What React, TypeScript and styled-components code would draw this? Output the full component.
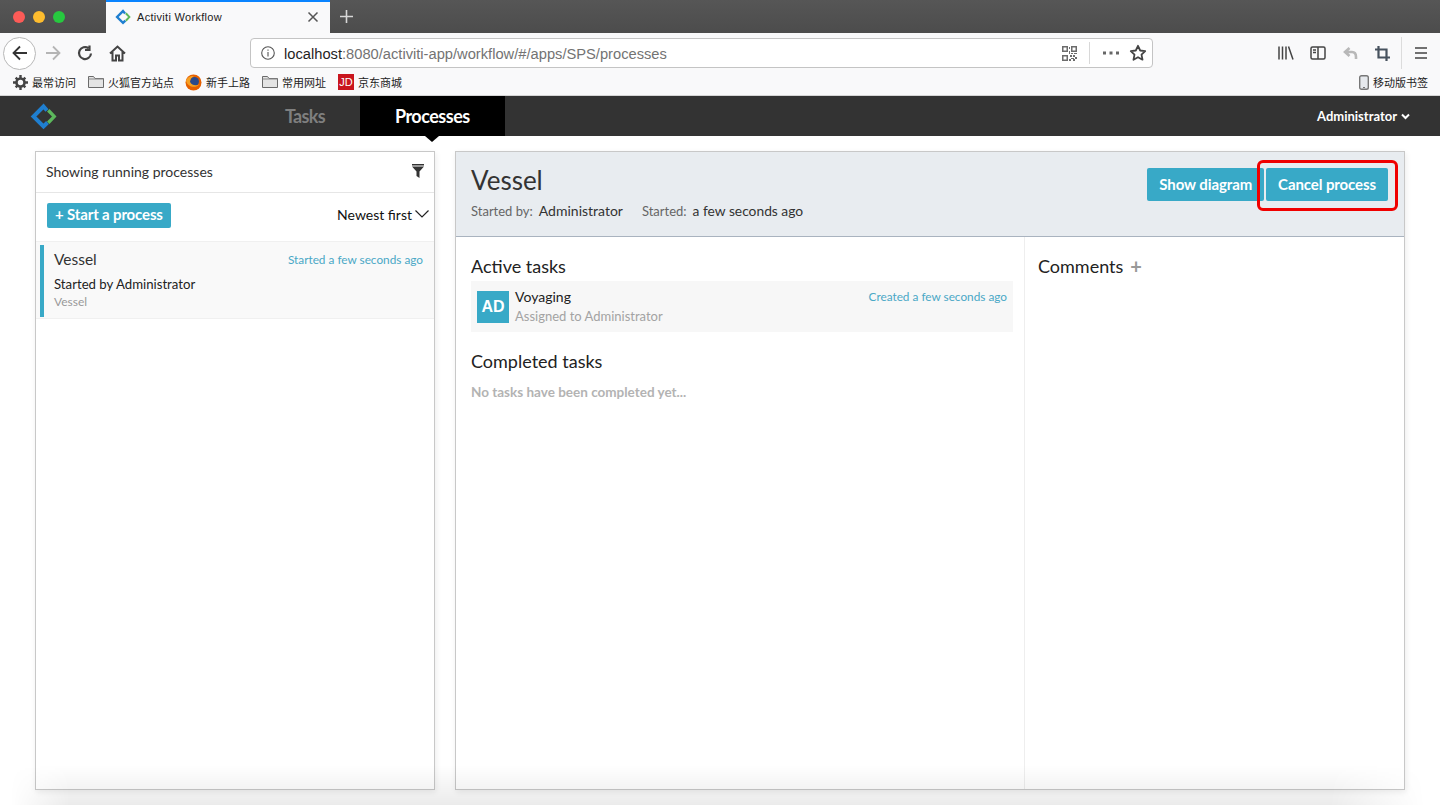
import React from "react";
import styled, { createGlobalStyle } from "styled-components";

const GlobalStyle = createGlobalStyle`
  html, body {
    margin: 0;
    padding: 0;
    background: #fff;
  }
  * {
    box-sizing: border-box;
  }
  #root {
    height: 805px;
    overflow: hidden;
    font-family: Lato, "Noto Sans", sans-serif;
  }
`;

const Page = styled.div`
  position: relative;
  display: flex;
  flex-direction: column;
  width: 1440px;
  height: 805px;
  overflow: hidden;
`;

/* browser chrome */
const TabStrip = styled.div`
  display: flex;
  align-items: stretch;
  height: 33px;
  background: linear-gradient(#565656, #4c4c4c);
`;

const Lights = styled.div`
  display: flex;
  align-items: center;
  gap: 8px;
  width: 106px;
  padding-left: 13px;
`;

const Light = styled.span<{ color: string }>`
  width: 12px;
  height: 12px;
  border-radius: 50%;
  background: ${({ color }) => color};
`;

const BrowserTab = styled.div`
  display: flex;
  align-items: center;
  width: 224px;
  padding: 0 11px 1px 9px;
  background: #f9f9fa;
  border-top: 2px solid #0a84ff;
`;

const TabTitle = styled.span`
  flex: 1;
  margin-left: 6px;
  padding-bottom: 1px;
  font: 11px "Liberation Sans", sans-serif;
  letter-spacing: 0.3px;
  color: #222;
`;

const NewTab = styled.div`
  display: flex;
  align-items: center;
  padding-left: 9px;
`;

const NavBar = styled.div`
  display: flex;
  align-items: center;
  height: 38px;
  padding-top: 2px;
  background: #f9f9fa;
`;

const BackCircle = styled.div`
  display: flex;
  align-items: center;
  justify-content: center;
  width: 33px;
  height: 33px;
  margin-left: 3px;
  border: 1px solid #b8b8b8;
  border-radius: 50%;
  background: #fff;
`;

const NavIcon = styled.div<{ $w?: number }>`
  display: flex;
  align-items: center;
  justify-content: center;
  width: ${({ $w }) => $w ?? 32}px;
`;

const UrlBar = styled.div`
  display: flex;
  align-items: center;
  width: 903px;
  height: 30px;
  margin-left: 117px;
  padding-left: 10px;
  background: #fff;
  border: 1px solid #c4c4c4;
  border-radius: 4px;
`;

const UrlText = styled.div`
  flex: 1;
  margin-left: 9px;
  padding-top: 2px;
  font: 14.7px "Liberation Sans", sans-serif;
  color: #737373;

  b {
    font-weight: 400;
    color: #1f1f1f;
  }
`;

const UrlDivider = styled.span`
  width: 1px;
  height: 22px;
  margin: 0 8px 0 12px;
  background: #d8d8d8;
`;

const ToolbarRight = styled.div`
  display: flex;
  align-items: center;
  margin-left: 117px;
`;

const ToolbarDivider = styled.span`
  width: 1px;
  height: 32px;
  margin: 0 9px 0 3px;
  background: #dcdcdc;
`;

const BookmarkBar = styled.div`
  display: flex;
  align-items: center;
  height: 25px;
  padding: 0 12px 2px 13px;
  background: #f9f9fa;
  border-bottom: 1px solid #d5d5d5;
`;

const Bookmark = styled.div<{ $gap?: number }>`
  display: flex;
  align-items: center;
  gap: 4px;
  margin-right: ${({ $gap }) => $gap ?? 12}px;
  font: 11px "Noto Sans CJK SC", sans-serif;
  color: #222;
`;

const BookmarkSpacer = styled.div`
  flex: 1;
`;

const JdBadge = styled.span`
  display: flex;
  align-items: center;
  justify-content: center;
  width: 16px;
  height: 16px;
  background: #c9151e;
  color: #fff;
  font: 400 11px "Liberation Sans", sans-serif;
`;

/* app header */
const AppNav = styled.nav`
  display: flex;
  align-items: stretch;
  height: 40px;
  background: #333;
`;

const LogoSlot = styled.div`
  display: flex;
  align-items: center;
  width: 250px;
  padding-left: 30px;
`;

const AppTab = styled.div<{ $active?: boolean }>`
  position: relative;
  display: flex;
  align-items: center;
  padding: 0 35px;
  background: ${({ $active }) => ($active ? "#000" : "transparent")};
  color: ${({ $active }) => ($active ? "#fff" : "#7f7f7f")};
  font-size: 18px;
  font-weight: 700;
  letter-spacing: ${({ $active }) => ($active ? -0.5 : -0.7)}px;

  ${({ $active }) =>
    $active &&
    `&::after {
      content: "";
      position: absolute;
      left: 50%;
      bottom: -6px;
      margin-left: -7px;
      border-left: 7px solid transparent;
      border-right: 7px solid transparent;
      border-top: 6px solid #000;
    }`}
`;

const UserMenu = styled.div`
  display: flex;
  align-items: center;
  gap: 4px;
  margin-left: auto;
  padding-right: 30px;
  color: #fff;
  font-size: 13px;
  font-weight: 700;
`;

/* content */
const Main = styled.main`
  flex: 1;
  display: flex;
  gap: 20px;
  padding: 15px 35px;
  min-height: 0;
`;

const Panel = styled.section<{ $width: number }>`
  display: flex;
  flex-direction: column;
  width: ${({ $width }) => $width}px;
  border: 1px solid #c8c8c8;
  box-shadow: 1px 2px 6px rgba(0, 0, 0, 0.08);
  background: #fff;
`;

const ListHead = styled.div`
  display: flex;
  align-items: center;
  justify-content: space-between;
  height: 41px;
  padding: 0 10px 2px;
  border-bottom: 1px solid #e6e6e6;
  font-size: 14px;
  color: #333;
`;

const ListTools = styled.div`
  display: flex;
  align-items: center;
  justify-content: space-between;
  height: 49px;
  padding: 0 5px 4px 11px;
  border-bottom: 1px solid #f0f0f0;
`;

const Button = styled.button<{ $small?: boolean }>`
  height: ${({ $small }) => ($small ? 25 : 33)}px;
  padding: 0 ${({ $small }) => ($small ? 8 : 12)}px 2px;
  border: 0;
  border-radius: 2px;
  background: #38a9c7;
  color: #fff;
  font-family: Lato, sans-serif;
  font-size: 15px;
  font-weight: 700;
  letter-spacing: ${({ $small }) => ($small ? -0.15 : -0.1)}px;
`;

const SortLabel = styled.div`
  display: flex;
  align-items: center;
  gap: 3px;
  padding-bottom: 2px;
  font-size: 14px;
  color: #111;
`;

const ListItem = styled.div`
  display: flex;
  flex-direction: column;
  height: 77px;
  padding: 3px 11px 0 4px;
  background: #f9f9f9;
  border-bottom: 1px solid #f0f0f0;
`;

const ItemBody = styled.div`
  height: 72px;
  padding: 0 0 0 10px;
  border-left: 4px solid #38a9c7;
`;

const ItemTop = styled.div`
  display: flex;
  align-items: center;
  justify-content: space-between;
  height: 28px;
  font-size: 15.5px;
  color: #333;
`;

const Timestamp = styled.span`
  font-size: 11.8px;
  color: #4aa8c6;
`;

const ItemBy = styled.div`
  margin-top: 2px;
  font-size: 13.2px;
  line-height: 18px;
  color: #222;
`;

const ItemSub = styled.div`
  margin-top: 1px;
  font-size: 12px;
  line-height: 16px;
  color: #999;
`;

const DetailHead = styled.header`
  display: flex;
  justify-content: space-between;
  height: 85px;
  padding: 16px 16px 0 15px;
  background: #e8ecf0;
  border-bottom: 1px solid #a9b3bf;
`;

const DetailTitle = styled.h1`
  margin: 0;
  font-size: 26px;
  font-weight: 400;
  line-height: 24px;
  color: #333;
`;

const Meta = styled.div`
  display: flex;
  margin-top: 10px;
  font-size: 13px;
  line-height: 18px;
  color: #666;
`;

const MetaValue = styled.span<{ $size: number }>`
  margin-left: 6px;
  margin-right: 19px;
  font-size: ${({ $size }) => $size}px;
  color: #333;
`;

const HeadActions = styled.div`
  display: flex;
  gap: 2px;
`;

const CancelWrap = styled.div`
  position: relative;
  height: 33px;
`;

const Highlight = styled.div`
  position: absolute;
  left: -9px;
  right: -10px;
  top: -8px;
  bottom: -10px;
  border: 3px solid #f00000;
  border-radius: 6px;
`;

const DetailBody = styled.div`
  flex: 1;
  display: flex;
`;

const TasksColumn = styled.div`
  width: 569px;
  padding: 14px 11px 0 15px;
  border-right: 1px solid #eee;
`;

const CommentsColumn = styled.div`
  flex: 1;
  padding: 14px 13px 0;
`;

const SectionTitle = styled.h2`
  display: flex;
  align-items: center;
  gap: 7px;
  margin: 0;
  font-size: 18px;
  font-weight: 400;
  line-height: 30px;
  color: #222;
`;

const PlusMark = styled.span`
  font-size: 20px;
  font-weight: 700;
  color: #999;
`;

const TaskRow = styled.div`
  display: flex;
  align-items: center;
  gap: 6px;
  height: 51px;
  padding: 0 6px;
  background: #f7f7f7;
`;

const Avatar = styled.div`
  display: flex;
  align-items: center;
  justify-content: center;
  width: 32px;
  height: 32px;
  background: #38a9c7;
  color: #fff;
  font: 700 16px "Liberation Sans", sans-serif;
`;

const TaskText = styled.div`
  flex: 1;
  margin-top: -1px;
`;

const TaskName = styled.div`
  display: flex;
  justify-content: space-between;
  font-size: 14px;
  line-height: 18px;
  color: #222;
`;

const TaskSub = styled.div`
  margin-top: 1px;
  font-size: 13px;
  line-height: 18px;
  color: #a3a3a3;
`;

const CompletedTitle = styled(SectionTitle)`
  margin-top: 14px;
`;

const EmptyNote = styled.div`
  margin-top: 7px;
  font-size: 13.5px;
  font-weight: 700;
  line-height: 18px;
  color: #b3b3b3;
`;

const WindowShade = styled.div`
  position: absolute;
  left: 0;
  right: 0;
  bottom: 0;
  height: 40px;
  background: linear-gradient(rgba(0, 0, 0, 0), rgba(0, 0, 0, 0.08));
  mask-image: linear-gradient(90deg, transparent 10px, #000 70px, #000 1330px, transparent 1425px);
  pointer-events: none;
`;

/* drawings */
const ActivitiLogo = ({ size }: { size: number }) => (
  <svg width={size} height={size} viewBox="0 0 26 27" fill="none">
    <path d="M16.500 7.500L13 3.500 3 13.500 13 23.500 17 19.500" stroke="#1f7fd0" strokeWidth="4" />
    <path d="M19 6L26 13.500 19 21 16.500 18.500 21.500 13.500 16.500 8.500Z" fill="#5cb85c" />
  </svg>
);

const Folder = () => (
  <svg width="16" height="14" viewBox="0 0 16 14">
    <path d="M.5 12.500V1.500h5l1.500 2h8.500v9z" fill="#e4e4e4" stroke="#6a6a6a" />
    <path d="M.5 4h15" stroke="#8a8a8a" />
  </svg>
);

const Firefox = () => (
  <svg width="17" height="17" viewBox="0 0 17 17">
    <circle cx="8.500" cy="8.500" r="8" fill="#e66000" />
    <circle cx="9.500" cy="7.500" r="4.500" fill="#2a4a8c" />
    <path d="M1 7C3 13 10 15 15 10 12 12 7 12 5 8 5 5 7 3 9 2 6 1.500 2 3 1 7Z" fill="#f5a023" />
  </svg>
);

const Stroke = ({ w = 18, h = 18, box = "0 0 18 18", color = "#444", sw = 1.800, d }: { w?: number; h?: number; box?: string; color?: string; sw?: number; d: string }) => (
  <svg width={w} height={h} viewBox={box} fill="none" stroke={color} strokeWidth={sw}>
    <path d={d} />
  </svg>
);

const Qr = () => (
  <svg width="15" height="15" viewBox="0 0 15 15" fill="#6c6c6c">
    <path d="M0 0h6v6H0zM1.500 1.500v3h3v-3zM9 0h6v6H9zm1.500 1.500v3h3v-3zM0 9h6v6H0zm1.500 1.500v3h3v-3z" fillRule="evenodd" />
    <path d="M7 1h1v2H7zM7 5h1v3H7zM9 7h2v1H9zM12 7h3v1h-3zM8 9h2v2H8zM11 9h2v2h-2zM13 11h2v2h-2zM9 12h3v1H9zM7 13h2v2H7zM11 13h2v2h-2z" />
  </svg>
);

const Gear = () => (
  <svg width="15" height="15" viewBox="0 0 15 15">
    <circle cx="7.500" cy="7.500" r="4" fill="none" stroke="#444" strokeWidth="2.600" />
    <path d="M6.300 0h2.400v3H6.300zM6.300 12h2.400v3H6.300zM0 6.300h3v2.400H0zM12 6.300h3v2.400h-3zM1.800 3.500l1.700-1.700 2 2-1.700 1.700zM9.500 11.200l1.700-1.700 2 2-1.700 1.700zM11.500 1.800l1.700 1.700-2 2-1.700-1.700zM3.800 9.500l1.700 1.700-2 2-1.700-1.700z" fill="#444" />
  </svg>
);

const Star = () => (
  <svg width="18" height="18" viewBox="0 0 18 18" fill="none" stroke="#444" strokeWidth="1.800" strokeLinejoin="round">
    <path d="M9 1.800l2.200 4.700 5 .6-3.700 3.500 1 5.100L9 13.200l-4.500 2.500 1-5.100L1.800 7.100l5-.6z" />
  </svg>
);

const Phone = () => (
  <svg width="10" height="15" viewBox="0 0 10 15">
    <rect x=".7" y=".7" width="8.600" height="13.600" rx="1.800" fill="#e6e9ed" stroke="#777" strokeWidth="1.400" />
    <path d="M4 12.500h2" stroke="#777" />
  </svg>
);

const Filter = () => (
  <svg width="12" height="14" viewBox="0 0 12 14" fill="#333">
    <path d="M0 0h12v1.500H0zM0 2.500h12L7.500 7.500V14L4.500 12V7.500z" />
  </svg>
);

export default function App() {
  return (
    <Page>
      <GlobalStyle />
      <TabStrip>
        <Lights>
          <Light color="#fc5b57" />
          <Light color="#fdbc2e" />
          <Light color="#27c83f" />
        </Lights>
        <BrowserTab>
          <ActivitiLogo size={16} />
          <TabTitle>Activiti Workflow</TabTitle>
          <Stroke w={12} h={12} box="0 0 12 12" color="#555" sw={1.500} d="M1.500 1.500l9 9M10.500 1.500l-9 9" />
        </BrowserTab>
        <NewTab>
          <Stroke w={15} h={15} box="0 0 15 15" color="#d8d8d8" sw={1.600} d="M7.500 1v13M1 7.500h13" />
        </NewTab>
      </TabStrip>

      <NavBar>
        <BackCircle>
          <Stroke w={18} h={18} color="#333" sw={1.800} d="M16 9H2.500M9 2.500L2.500 9 9 15.500" />
        </BackCircle>
        <NavIcon $w={33}>
          <Stroke w={18} h={18} color="#b5b5b5" sw={1.800} d="M2 9h13.500M9 2.500L15.500 9 9 15.500" />
        </NavIcon>
        <NavIcon $w={32}>
          <Stroke w={16} h={16} box="0 0 16 16" color="#444" sw={2.200} d="M14 8.500A6 6 0 1 1 11.500 3.200M12.500 .5v4.500H8" />
        </NavIcon>
        <NavIcon $w={32}>
          <Stroke w={17} h={17} box="0 0 17 17" color="#444" sw={2} d="M1 8.500L8.500 1.500 16 8.500M3.500 7v8.500h3.500v-5h3v5h3.500V7" />
        </NavIcon>
        <UrlBar>
          <Stroke w={14} h={14} box="0 0 14 14" color="#555" sw={1.100} d="M7 .7a6.300 6.300 0 1 0 0 12.600A6.300 6.300 0 0 0 7 .7zM7 6v4.500M7 3.500v1.300" />
          <UrlText>
            <b>localhost</b>:8080/activiti-app/workflow/#/apps/SPS/processes
          </UrlText>
          <Qr />
          <UrlDivider />
          <NavIcon $w={26}>
            <Stroke w={18} h={4} box="0 0 18 4" color="#666" sw={3.200} d="M1 2h3M7.500 2h3M14 2h3" />
          </NavIcon>
          <NavIcon $w={28}>
            <Star />
          </NavIcon>
        </UrlBar>
        <ToolbarRight>
          <NavIcon $w={32}>
            <Stroke w={16} h={14} box="0 0 16 14" color="#444" sw={1.500} d="M1 .5v13M4.500 .5v13M8 .5v13M10.500 .5l4.500 13" />
          </NavIcon>
          <NavIcon $w={32}>
            <Stroke w={16} h={14} box="0 0 16 14" color="#444" sw={1.500} d="M2.500 1h11a1.500 1.500 0 0 1 1.500 1.500v9a1.500 1.500 0 0 1-1.500 1.500h-11A1.500 1.500 0 0 1 1 11.500v-9A1.500 1.500 0 0 1 2.500 1zM8 1v12M3 4h3M3 6.500h3" />
          </NavIcon>
          <NavIcon $w={32}>
            <Stroke w={15} h={15} box="0 0 15 15" color="#b8b8b8" sw={2.600} d="M6.500 2L2 6l4.500 4M2.500 6H9c3 0 4 2 4 5v2" />
          </NavIcon>
          <NavIcon $w={32}>
            <Stroke w={15} h={15} box="0 0 15 15" color="#47525e" sw={2.200} d="M3.500 0v11.500H15M0 3.500h11.500V15" />
          </NavIcon>
          <ToolbarDivider />
          <NavIcon $w={20}>
            <Stroke w={14} h={12} box="0 0 14 12" color="#444" sw={1.600} d="M1 1h12M1 6h12M1 11h12" />
          </NavIcon>
        </ToolbarRight>
      </NavBar>

      <BookmarkBar>
        <Bookmark><Gear />最常访问</Bookmark>
        <Bookmark $gap={11}><Folder />火狐官方站点</Bookmark>
        <Bookmark><Firefox />新手上路</Bookmark>
        <Bookmark><Folder />常用网址</Bookmark>
        <Bookmark><JdBadge>JD</JdBadge>京东商城</Bookmark>
        <BookmarkSpacer />
        <Bookmark $gap={0}><Phone />移动版书签</Bookmark>
      </BookmarkBar>

      <AppNav>
        <LogoSlot>
          <ActivitiLogo size={27} />
        </LogoSlot>
        <AppTab>Tasks</AppTab>
        <AppTab $active>Processes</AppTab>
        <UserMenu>
          Administrator
          <Stroke w={9} h={7} box="0 0 9 7" color="#fff" sw={2} d="M1 1.500l3.500 3.500L8 1.500" />
        </UserMenu>
      </AppNav>

      <Main>
        <Panel $width={400}>
          <ListHead>
            Showing running processes
            <Filter />
          </ListHead>
          <ListTools>
            <Button $small>+ Start a process</Button>
            <SortLabel>
              Newest first
              <Stroke w={14} h={8} box="0 0 14 8" color="#222" sw={1.200} d="M.5.5L7 7l6.500-6.500" />
            </SortLabel>
          </ListTools>
          <ListItem>
            <ItemBody>
              <ItemTop>
                Vessel
                <Timestamp>Started a few seconds ago</Timestamp>
              </ItemTop>
              <ItemBy>Started by Administrator</ItemBy>
              <ItemSub>Vessel</ItemSub>
            </ItemBody>
          </ListItem>
        </Panel>

        <Panel $width={950}>
          <DetailHead>
            <div>
              <DetailTitle>Vessel</DetailTitle>
              <Meta>
                Started by: <MetaValue $size={14}>Administrator</MetaValue>
                Started: <MetaValue $size={13.8}>a few seconds ago</MetaValue>
              </Meta>
            </div>
            <HeadActions>
              <Button>Show diagram</Button>
              <CancelWrap>
                <Button>Cancel process</Button>
                <Highlight />
              </CancelWrap>
            </HeadActions>
          </DetailHead>
          <DetailBody>
            <TasksColumn>
              <SectionTitle>Active tasks</SectionTitle>
              <TaskRow>
                <Avatar>AD</Avatar>
                <TaskText>
                  <TaskName>
                    Voyaging
                    <Timestamp>Created a few seconds ago</Timestamp>
                  </TaskName>
                  <TaskSub>Assigned to Administrator</TaskSub>
                </TaskText>
              </TaskRow>
              <CompletedTitle>Completed tasks</CompletedTitle>
              <EmptyNote>No tasks have been completed yet...</EmptyNote>
            </TasksColumn>
            <CommentsColumn>
              <SectionTitle>
                Comments <PlusMark>+</PlusMark>
              </SectionTitle>
            </CommentsColumn>
          </DetailBody>
        </Panel>
      </Main>
      <WindowShade />
    </Page>
  );
}
